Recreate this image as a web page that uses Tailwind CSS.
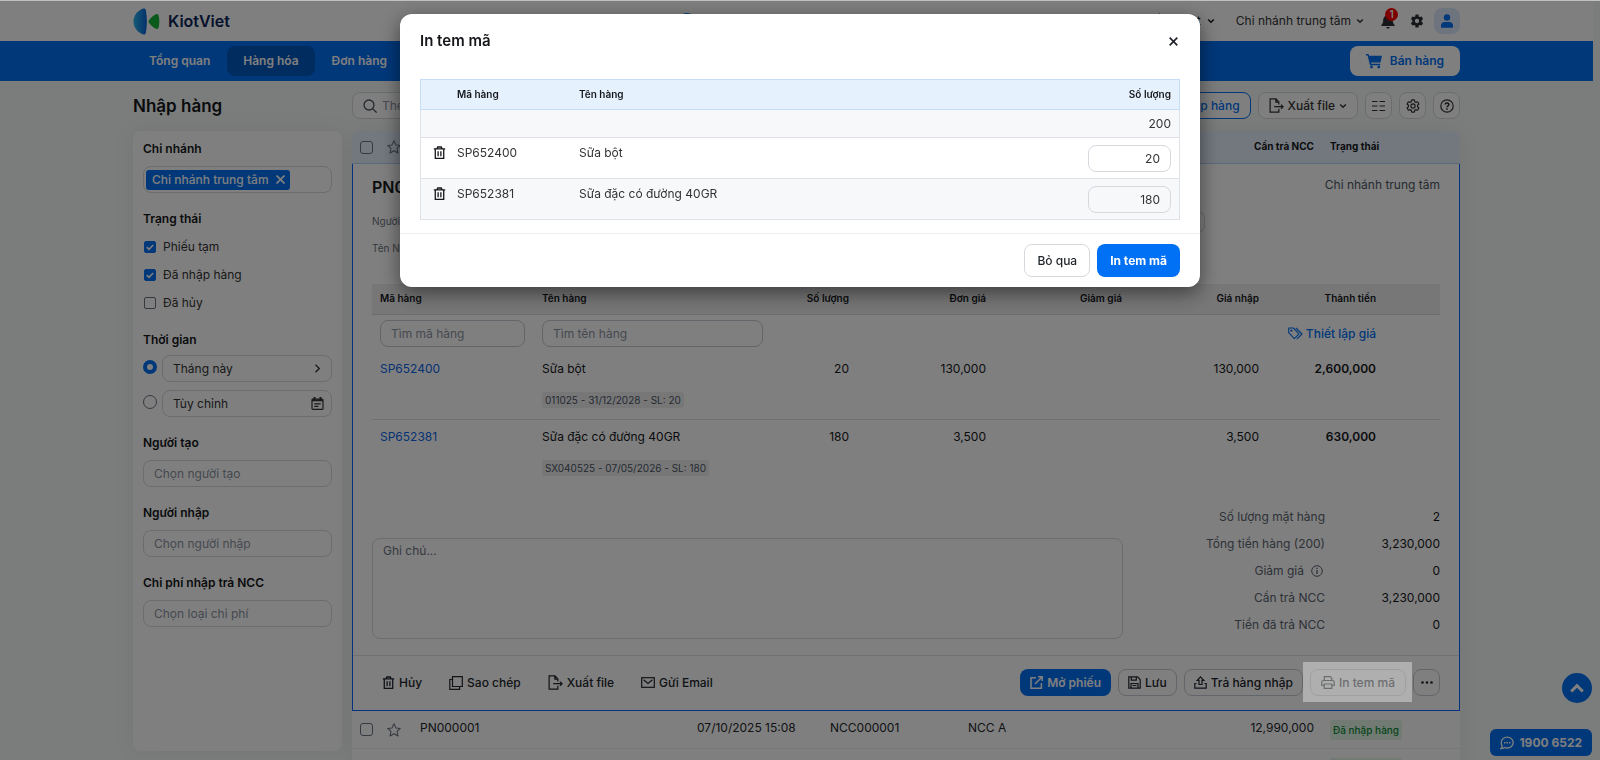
<!DOCTYPE html>
<html lang="vi">

<head>
  <meta charset="UTF-8" />
  <title>KiotViet - Nhập hàng</title>
  <meta name="viewport" content="width=device-width, initial-scale=1.0" />
  <script src="https://cdn.jsdelivr.net/npm/@tailwindcss/browser@4"></script>
</head>

<body class="h-screen overflow-hidden bg-[#f6f9f8] font-['Inter','Open_Sans',sans-serif] text-xs text-[#15171a] border-t border-[#c0c2c0]">

  <!-- icons -->
  <svg class="hidden">
    <symbol id="i-trash" viewBox="0 0 16 16" fill="none" stroke="currentColor" stroke-width="1.600">
      <path d="M1 3.500h14M5 3.200l.8-2h4.400l.8 2M2.800 3.500v11.700h10.400V3.500M6.300 6.500v6M9.700 6.500v6" />
    </symbol>
    <symbol id="i-star" viewBox="0 0 16 16" fill="none" stroke="currentColor" stroke-width="1.200" stroke-linejoin="round">
      <path d="M8 .9l2.200 4.700 5 .6-3.700 3.500 1 5.100L8 12.300l-4.500 2.500 1-5.100L.8 6.200l5-.6z" />
    </symbol>
    <symbol id="i-export" viewBox="0 0 16 16" fill="none" stroke="currentColor" stroke-width="1.300">
      <path d="M10.500 7V4.200L7.500 1H1.200v14h9.300v-3.500M7.300 1v3.500h3.200M5.500 9.300H15M12.800 7.100L15 9.300l-2.200 2.200" />
    </symbol>
    <symbol id="i-chevron" viewBox="0 0 10 10" fill="none" stroke="currentColor" stroke-width="1.800">
      <path d="M1.500 3L5 6.500 8.500 3" />
    </symbol>
    <symbol id="i-gear" viewBox="0 0 24 24" fill="currentColor">
      <path fill-rule="evenodd" d="M9.500 1h5l.6 3.200 1.800 1 3.100-1.100 2.500 4.300-2.500 2.100v3l2.500 2.100-2.500 4.300-3.100-1.100-1.800 1-.6 3.200h-5l-.6-3.200-1.800-1L4 19.900l-2.500-4.300L4 13.500v-3L1.500 8.400 4 4.100l3.100 1.100 1.800-1zM12 8.300a3.700 3.700 0 100 7.400 3.700 3.700 0 000-7.400z" />
    </symbol>
  </svg>

  <header class="mr-[7px] bg-white">
    <div class="max-w-[1327px] h-10 mx-auto flex items-center">
      <a href="#" class="flex items-center gap-2">
        <svg class="w-[27px] h-[27px]" viewBox="0 0 27 27">
          <defs>
            <linearGradient id="logo" x1="0" x2="1"><stop offset="0" stop-color="#2bb6ea" /><stop offset="1" stop-color="#0a63d8" /></linearGradient>
          </defs>
          <path d="M9.500.8C4 3 .5 8 .5 13.500S4 24 9.500 26.200c2 .7 3 .2 3.400-1.700 1.300-7 1.300-15 0-22C12.500.6 11.500.1 9.500.8z" fill="url(#logo)" />
          <path d="M16 12.200c2-2.700 4.300-4.800 7-6 1.300-.6 2.200-.1 2.600 1.300 1 4 1 8 0 12-.4 1.400-1.300 1.900-2.600 1.300-2.700-1.200-5-3.300-7-6-.8-1-.8-1.600 0-2.600z" fill="#16b437" />
        </svg>
        <span class="text-base font-semibold text-[#0a2458]">KiotViet</span>
      </a>
      <button class="mx-auto w-[30px] h-4 flex justify-center text-[#0070f4]" title="Giao hàng">
        <svg class="w-4 h-4" viewBox="0 0 16 16" fill="currentColor"><circle cx="8" cy="8" r="8" /></svg>
      </button>
      <div class="flex items-center">
        <button class="flex items-center gap-[6px] mr-[21px]">Tiếng Việt <svg class="w-2 h-2"><use href="#i-chevron" /></svg></button>
        <button class="flex items-center gap-[5px] text-[#333]">Chi nhánh trung tâm <svg class="w-2 h-2"><use href="#i-chevron" /></svg></button>
        <button class="relative ml-4 text-[#2b2f36]" title="Thông báo">
          <svg class="w-4 h-4" viewBox="0 0 16 16" fill="currentColor"><path d="M8 .8a1 1 0 011 1v.5c2.300.5 3.800 2.400 3.800 4.700 0 3 1 4 1.800 4.800v1.300H1.400v-1.300C2.200 11 3.200 10 3.200 7c0-2.300 1.500-4.200 3.800-4.700v-.5a1 1 0 011-1zM6.300 14h3.400a1.700 1.700 0 01-3.400 0z" /></svg>
          <span class="absolute -top-[5px] left-[5px] w-[13px] h-[13px] rounded-full bg-[#f00] text-white text-[10px] leading-[13px] font-semibold text-center">1</span>
        </button>
        <button class="ml-[14px] text-[#2b2f36]" title="Thiết lập"><svg class="w-[14px] h-[14px]"><use href="#i-gear" /></svg></button>
        <button class="ml-2.5 w-[26px] h-[26px] rounded-lg bg-[#dde9fb] flex items-center justify-center text-[#0070f4]" title="Tài khoản">
          <svg class="w-3 h-[14px]" viewBox="0 0 12 14" fill="currentColor"><circle cx="6" cy="3.500" r="3.200" /><path d="M0 13v-1.500C0 9.500 1.500 8 3.500 8h5c2 0 3.500 1.500 3.500 3.500V13q0 .7-.7.7H.7Q0 13.700 0 13z" /></svg>
        </button>
      </div>
    </div>
  </header>

  <nav class="mr-[7px] bg-[#0070f4]">
    <div class="max-w-[1327px] h-10 mx-auto flex items-center gap-px font-semibold text-white">
      <a href="#" class="h-[30px] px-4 flex items-center">Tổng quan</a>
      <a href="#" class="h-[30px] px-4 flex items-center rounded-lg bg-[#0058bf]">Hàng hóa</a>
      <a href="#" class="h-[30px] px-4 flex items-center">Đơn hàng</a>
      <button class="ml-auto h-[30px] px-4 flex items-center gap-2 rounded-lg bg-white text-[#0070f4] font-semibold">
        <svg class="w-4 h-4" viewBox="0 0 16 16" fill="currentColor"><path d="M0 1h2.600l.5 1.800H16l-1.500 6.600H5l.3 1.400h8.900v1.400H4L1.600 2.400H0z" /><circle cx="5.500" cy="14" r="1.400" /><circle cx="12.800" cy="14" r="1.400" /></svg>
        Bán hàng
      </button>
    </div>
  </nav>

  <main class="mr-[7px]">
    <div class="max-w-[1327px] mx-auto pt-[11px]">

      <!-- title and toolbar -->
      <div class="flex items-center gap-2.5 mb-3">
        <h1 class="w-[209px] text-[17px] leading-6 font-semibold">Nhập hàng</h1>
        <div class="flex-1 flex items-center gap-[7px]">
          <label class="w-[340px] h-[27px] px-2.5 flex items-center gap-[5px] rounded-lg border border-[#d5d9de] bg-white mr-auto">
            <svg class="w-[14px] h-[14px] text-[#4b5563]" viewBox="0 0 14 14" fill="none" stroke="currentColor" stroke-width="1.300"><circle cx="6" cy="6" r="5" /><path d="M9.600 9.600l4 4" /></svg>
            <input type="text" placeholder="Theo mã phiếu nhập" class="flex-1 outline-none placeholder:text-[#8b93a0]" />
          </label>
          <button class="h-[27px] px-2.5 rounded-lg border border-[#0070f4] bg-white text-[#0070f4] font-medium">+ Nhập hàng</button>
          <button class="h-[27px] px-2.5 flex items-center gap-1 rounded-lg border border-[#d5d9de] bg-white font-medium text-[#333]">
            <svg class="w-[15px] h-[15px]"><use href="#i-export" /></svg> Xuất file <svg class="w-2 h-2"><use href="#i-chevron" /></svg>
          </button>
          <button class="w-[27px] h-[27px] flex items-center justify-center rounded-lg border border-[#d5d9de] bg-white text-[#333]" title="Cột hiển thị">
            <svg class="w-[13px] h-3" viewBox="0 0 13 12" stroke="currentColor" stroke-width="1.200"><path d="M0 1.500h5.500M7.500 1.500H13M0 6h5.500M7.500 6H13M0 10.500h5.500M7.500 10.500H13" /></svg>
          </button>
          <button class="w-[27px] h-[27px] flex items-center justify-center rounded-lg border border-[#d5d9de] bg-white text-[#333]" title="Thiết lập">
            <svg class="w-[14px] h-[14px]" viewBox="0 0 24 24" fill="none" stroke="currentColor" stroke-width="2" stroke-linejoin="round"><path d="M9.800 1.500h4.400l.7 3 2 1.200 3-.9 2.200 3.800-2.300 2.100v2.600l2.300 2.100-2.200 3.800-3-.9-2 1.200-.7 3H9.800l-.7-3-2-1.200-3 .9-2.200-3.800 2.300-2.100v-2.600L1.900 8.600l2.200-3.800 3 .9 2-1.200z" /><circle cx="12" cy="12" r="3.600" /></svg>
          </button>
          <button class="w-[27px] h-[27px] flex items-center justify-center rounded-lg border border-[#d5d9de] bg-white text-[#333]" title="Trợ giúp">
            <svg class="w-[14px] h-[14px]" viewBox="0 0 14 14" fill="none" stroke="currentColor" stroke-width="1.200"><circle cx="7" cy="7" r="6.200" /><path d="M5.200 5.600c0-2.300 3.700-2.300 3.700 0 0 1.300-1.900 1.300-1.900 2.700" stroke-width="1.500" /><path d="M7 9.200v1.500" stroke-width="1.500" /></svg>
          </button>
        </div>
      </div>

      <div class="flex items-start gap-2.5">

        <!-- filters -->
        <aside class="w-[209px] h-[620px] shrink-0 px-2.5 pt-[9px] rounded-lg bg-white shadow-[0_0_24px_rgba(0,0,0,0.06)] flex flex-col gap-[17px]">
          <section>
            <h2 class="mb-2 leading-[18px] font-semibold">Chi nhánh</h2>
            <div class="h-[27px] px-[2px] flex items-center rounded-lg border border-[#d5d9de]">
              <span class="h-5 pl-1.5 pr-[5px] flex items-center gap-[7px] rounded-[3px] bg-[#0070f4] text-white font-medium">Chi nhánh trung tâm
                <button title="Xóa"><svg class="w-[9px] h-[9px]" viewBox="0 0 9 9" stroke="currentColor" stroke-width="1.700"><path d="M.5.5l8 8M8.500.5l-8 8" /></svg></button>
              </span>
            </div>
          </section>

          <section>
            <h2 class="mb-2 leading-[18px] font-semibold">Trạng thái</h2>
            <div class="flex flex-col gap-[6px] text-[#333]">
              <label class="relative h-[22px] pl-px flex items-center gap-[7px]">
                <input type="checkbox" checked class="peer appearance-none w-3 h-3 rounded-[2px] border border-[#6b7280] checked:bg-[#0070f4] checked:border-[#0070f4]" />
                <svg class="absolute left-[3px] w-2 h-2 text-white hidden peer-checked:block" viewBox="0 0 8 8" fill="none" stroke="currentColor" stroke-width="1.600"><path d="M.8 4.200L3 6.300 7.200 2" /></svg>
                Phiếu tạm
              </label>
              <label class="relative h-[22px] pl-px flex items-center gap-[7px]">
                <input type="checkbox" checked class="peer appearance-none w-3 h-3 rounded-[2px] border border-[#6b7280] checked:bg-[#0070f4] checked:border-[#0070f4]" />
                <svg class="absolute left-[3px] w-2 h-2 text-white hidden peer-checked:block" viewBox="0 0 8 8" fill="none" stroke="currentColor" stroke-width="1.600"><path d="M.8 4.200L3 6.300 7.200 2" /></svg>
                Đã nhập hàng
              </label>
              <label class="relative h-[22px] pl-px flex items-center gap-[7px]">
                <input type="checkbox" class="peer appearance-none w-3 h-3 rounded-[2px] border border-[#6b7280] checked:bg-[#0070f4] checked:border-[#0070f4]" />
                Đã hủy
              </label>
            </div>
          </section>

          <section>
            <h2 class="mb-[6px] leading-[18px] font-semibold">Thời gian</h2>
            <div class="flex flex-col gap-2 text-[#333]">
              <div class="flex items-start gap-[5px]">
                <input type="radio" name="time" id="time-month" aria-label="Tháng này" checked class="mt-[5px] appearance-none w-[14px] h-[14px] rounded-full border border-[#6b7280] checked:border-4 checked:border-[#0070f4]" />
                <button class="flex-1 h-[27px] px-2.5 flex items-center justify-between rounded-lg border border-[#d5d9de]">Tháng này
                  <svg class="w-[7px] h-[9px]" viewBox="0 0 7 9" fill="none" stroke="currentColor" stroke-width="1.300"><path d="M1.500.8l3.800 3.700-3.800 3.700" /></svg>
                </button>
              </div>
              <div class="flex items-start gap-[5px]">
                <input type="radio" name="time" id="time-custom" aria-label="Tùy chỉnh" class="mt-[5px] appearance-none w-[14px] h-[14px] rounded-full border border-[#6b7280] checked:border-4 checked:border-[#0070f4]" />
                <button class="flex-1 h-[27px] pl-2.5 pr-[7px] flex items-center justify-between rounded-lg border border-[#d5d9de]">Tùy chỉnh
                  <svg class="w-[13px] h-[13px]" viewBox="0 0 13 13" fill="none" stroke="currentColor" stroke-width="1.200"><rect x="1" y="2" width="11" height="10.400" rx="1" /><path d="M1 3.300h11M3.500 0v3M9.500 0v3" stroke-width="2" /><path d="M3.300 6.800h6.400M3.300 9.300h4" /></svg>
                </button>
              </div>
            </div>
          </section>

          <section>
            <label for="creator" class="block mb-2 leading-[18px] font-semibold">Người tạo</label>
            <input id="creator" type="text" placeholder="Chọn người tạo" class="block w-full h-[27px] px-2.5 rounded-lg border border-[#d5d9de] placeholder:text-[#8b93a0]" />
          </section>
          <section>
            <label for="importer" class="block mb-2 leading-[18px] font-semibold">Người nhập</label>
            <input id="importer" type="text" placeholder="Chọn người nhập" class="block w-full h-[27px] px-2.5 rounded-lg border border-[#d5d9de] placeholder:text-[#8b93a0]" />
          </section>
          <section>
            <label for="cost" class="block mb-2 leading-[18px] font-semibold">Chi phí nhập trả NCC</label>
            <input id="cost" type="text" placeholder="Chọn loại chi phí" class="block w-full h-[27px] px-2.5 rounded-lg border border-[#d5d9de] placeholder:text-[#8b93a0]" />
          </section>
        </aside>

        <!-- receipts -->
        <table class="flex-1 w-full table-fixed border-separate border-spacing-0 bg-white rounded-t-lg shadow-[0_0_24px_rgba(0,0,0,0.06)]">
          <colgroup>
            <col class="w-7" /><col class="w-8" /><col class="w-[277px]" /><col class="w-[133px]" /><col class="w-[138px]" /><col /><col class="w-[138px]" />
          </colgroup>
          <thead class="text-[10px] font-semibold">
            <tr class="h-[33px]">
              <th class="pl-2 rounded-tl-lg bg-[#e6f1fe] border-b border-[#b5d3f8]"><input type="checkbox" aria-label="Chọn tất cả" class="block appearance-none w-[13px] h-[13px] rounded-[3px] border border-[#6b7280]" /></th>
              <th class="pl-[7px] bg-[#e6f1fe] border-b border-[#b5d3f8] text-[#6b7280]"><svg class="w-[14px] h-[14px]"><use href="#i-star" /></svg></th>
              <th class="px-2 text-left bg-[#e6f1fe] border-b border-[#b5d3f8]">Mã nhập hàng</th>
              <th class="px-2 text-left bg-[#e6f1fe] border-b border-[#b5d3f8]">Thời gian</th>
              <th class="px-2 text-left bg-[#e6f1fe] border-b border-[#b5d3f8]">Mã NCC</th>
              <th class="px-2 text-right bg-[#e6f1fe] border-b border-[#b5d3f8]">Cần trả NCC</th>
              <th class="px-2 text-left rounded-tr-lg bg-[#e6f1fe] border-b border-[#b5d3f8]">Trạng thái</th>
            </tr>
          </thead>
          <tbody>
            <tr>
              <td colspan="7" class="border-x border-b border-[#0a62ff] p-0 align-top">
                <div class="px-[19px] pt-[11px]">
                  <div class="h-6 flex items-start justify-between">
                    <h3 class="text-base font-semibold">PN000002</h3>
                    <span class="leading-5 text-[#4b5563]">Chi nhánh trung tâm</span>
                  </div>
                  <div class="w-[78%] h-5 mt-[13px] flex items-center justify-between text-[10px] text-[#6b7280]">
                    <span>Người tạo:</span>
                    <button class="w-40 h-5 rounded-md border border-[#d5d9de]" title="Người nhập"></button>
                  </div>
                  <div class="h-5 mt-[7px] flex items-center text-[10px] text-[#6b7280]">Tên NCC:</div>

                  <table class="w-full mt-[25px] table-fixed border-separate border-spacing-0">
                    <colgroup>
                      <col class="w-[162px]" /><col /><col class="w-[86px]" /><col class="w-[137px]" /><col class="w-[136px]" /><col class="w-[137px]" /><col class="w-[117px]" /><col class="w-14" />
                    </colgroup>
                    <thead class="text-[10px]">
                      <tr class="h-[31px] bg-[#efeff1]">
                        <th class="px-2 text-left font-semibold border-b border-[#d5d9de]">Mã hàng</th>
                        <th class="px-2 text-left font-semibold border-b border-[#d5d9de]">Tên hàng</th>
                        <th class="px-2 text-right font-semibold border-b border-[#d5d9de]">Số lượng</th>
                        <th class="px-2 text-right font-semibold border-b border-[#d5d9de]">Đơn giá</th>
                        <th class="px-2 text-right font-semibold border-b border-[#d5d9de]">Giảm giá</th>
                        <th class="px-2 text-right font-semibold border-b border-[#d5d9de]">Giá nhập</th>
                        <th class="px-2 text-right font-semibold border-b border-[#d5d9de]">Thành tiền</th>
                        <th class="border-b border-[#d5d9de]"></th>
                      </tr>
                    </thead>
                    <tbody>
                      <tr class="h-[37px]">
                        <td class="pl-2 pr-[9px]"><input type="text" aria-label="Tìm mã hàng" placeholder="Tìm mã hàng" class="block w-full h-[27px] px-2.5 rounded-lg border border-[#c5cad2] placeholder:text-[#8b93a0]" /></td>
                        <td class="px-2"><input type="text" aria-label="Tìm tên hàng" placeholder="Tìm tên hàng" class="block w-full h-[27px] px-2.5 rounded-lg border border-[#c5cad2] placeholder:text-[#8b93a0]" /></td>
                        <td colspan="5" class="px-2">
                          <a href="#" class="flex items-center justify-end gap-[3px] text-[#0070f4] font-medium">
                            <svg class="w-[15px] h-[13px]" viewBox="0 0 15 13" fill="none" stroke="currentColor" stroke-width="1.100" stroke-linejoin="round"><path d="M.7 1v4.700l5.600 5.900 4.700-4.700L5.400 1z" /><path d="M8 1l6 6-5.200 5.200" /><circle cx="3.400" cy="3.700" r=".6" /></svg>
                            Thiết lập giá
                          </a>
                        </td>
                        <td></td>
                      </tr>
                      <tr class="h-[68px] align-top leading-[18px]">
                        <td class="px-2 pt-2 border-b border-[#dfe2e6]"><a href="#" class="text-[#0a66e8]">SP652400</a></td>
                        <td class="px-2 pt-2 border-b border-[#dfe2e6]">Sữa bột
                          <div class="mt-[14px] flex"><span class="h-4 px-[3px] rounded-[3px] bg-[#eeeff1] text-[10px] leading-4 text-[#4b5563]">011025 - 31/12/2028 - SL: 20</span></div>
                        </td>
                        <td class="px-2 pt-2 text-right border-b border-[#dfe2e6]">20</td>
                        <td class="px-2 pt-2 text-right border-b border-[#dfe2e6]">130,000</td>
                        <td class="border-b border-[#dfe2e6]"></td>
                        <td class="px-2 pt-2 text-right border-b border-[#dfe2e6]">130,000</td>
                        <td class="px-2 pt-2 text-right font-semibold border-b border-[#dfe2e6]">2,600,000</td>
                        <td class="border-b border-[#dfe2e6]"></td>
                      </tr>
                      <tr class="h-[68px] align-top leading-[18px]">
                        <td class="px-2 pt-2"><a href="#" class="text-[#0a66e8]">SP652381</a></td>
                        <td class="px-2 pt-2">Sữa đặc có đường 40GR
                          <div class="mt-[14px] flex"><span class="h-4 px-[3px] rounded-[3px] bg-[#eeeff1] text-[10px] leading-4 text-[#4b5563]">SX040525 - 07/05/2026 - SL: 180</span></div>
                        </td>
                        <td class="px-2 pt-2 text-right">180</td>
                        <td class="px-2 pt-2 text-right">3,500</td>
                        <td></td>
                        <td class="px-2 pt-2 text-right">3,500</td>
                        <td class="px-2 pt-2 text-right font-semibold">630,000</td>
                        <td></td>
                      </tr>
                    </tbody>
                  </table>

                  <div class="mt-[15px] mb-4 flex items-end justify-between">
                    <textarea aria-label="Ghi chú" placeholder="Ghi chú..." class="block w-[751px] h-[101px] px-2.5 py-1 resize-none rounded-lg border border-[#d5d9de] placeholder:text-[#6b7280]"></textarea>
                    <dl class="w-[260px] pb-px grid grid-cols-[1fr_115px] leading-[27px] text-right">
                      <dt class="text-[#5b6470]">Số lượng mặt hàng</dt><dd>2</dd>
                      <dt class="text-[#5b6470]">Tổng tiền hàng (200)</dt><dd>3,230,000</dd>
                      <dt class="flex items-center justify-end gap-[7px] pr-0.5 text-[#5b6470]">Giảm giá
                        <svg class="w-3 h-3" viewBox="0 0 12 12" fill="none" stroke="currentColor"><circle cx="6" cy="6" r="5.300" /><path d="M6 2.800v1.200M6 5v4" stroke-width="1.300" /></svg>
                      </dt><dd>0</dd>
                      <dt class="text-[#5b6470]">Cần trả NCC</dt><dd>3,230,000</dd>
                      <dt class="text-[#5b6470]">Tiền đã trả NCC</dt><dd>0</dd>
                    </dl>
                  </div>
                </div>

                <div class="px-[19px] pt-[13px] pb-[14px] flex items-center border-t border-[#dfe2e6] font-medium text-[#22262c]">
                  <div class="flex items-center gap-[27px] pl-2.5">
                    <button class="flex items-center gap-1"><svg class="w-[13px] h-[13px]"><use href="#i-trash" /></svg> Hủy</button>
                    <button class="flex items-center gap-1">
                      <svg class="w-[14px] h-[14px]" viewBox="0 0 14 14" fill="none" stroke="currentColor" stroke-width="1.200"><path d="M3.500.7h9.800v9.800H3.500z" /><path d="M3.500 3.500H.8v9.800h9.800v-2.800" /></svg> Sao chép
                    </button>
                    <button class="flex items-center gap-1"><svg class="w-[15px] h-[15px]"><use href="#i-export" /></svg> Xuất file</button>
                    <button class="flex items-center gap-1">
                      <svg class="w-[14px] h-[11px]" viewBox="0 0 14 11" fill="none" stroke="currentColor" stroke-width="1.200"><rect x=".7" y=".7" width="12.600" height="9.600" /><path d="M2.500 2.800L7 6.500l4.500-3.700" /></svg> Gửi Email
                    </button>
                  </div>
                  <div class="ml-auto flex items-center gap-[7px]">
                    <button class="h-[27px] px-2.5 flex items-center gap-1 rounded-lg bg-[#0070f4] text-white font-semibold">
                      <svg class="w-[13px] h-[13px]" viewBox="0 0 13 13" fill="none" stroke="currentColor" stroke-width="1.500"><path d="M6 1.800H1v10.400h10.400V7M8 .8h4.200V5M12 1L5 8" /></svg> Mở phiếu
                    </button>
                    <button class="h-[27px] px-[9px] flex items-center gap-1 rounded-lg border border-[#c5cad2]">
                      <svg class="w-[13px] h-[13px]" viewBox="0 0 13 13" fill="none" stroke="currentColor" stroke-width="1.200"><path d="M.8.8h8.700l2.700 2.700v8.700H.8zM3.300.8v3.400h5V.8M3 12V7.500h7V12M4.500 9.500h4" /></svg> Lưu
                    </button>
                    <button class="h-[27px] px-[9px] flex items-center gap-1 rounded-lg border border-[#c5cad2]">
                      <svg class="w-[13px] h-[13px]" viewBox="0 0 13 13" fill="none" stroke="currentColor" stroke-width="1.200"><path d="M6.500.9l3.300 3.400H8v4.200H5V4.300H3.200zM2.500 7.500H.8v4.700h11.400V7.500h-1.700" /></svg> Trả hàng nhập
                    </button>
                    <div class="relative">
                      <button class="h-[27px] px-2.5 flex items-center gap-1 rounded-lg border border-[#c5cad2]">
                        <svg class="w-[14px] h-[13px]" viewBox="0 0 14 13" fill="none" stroke="currentColor" stroke-width="1.200"><path d="M3.200 4.500V.7h6l1.600 1.600v2.200M3.200 9.500H.8v-3.500q0-1.500 1.500-1.500h9.400q1.500 0 1.500 1.500v3.500h-2.400M3.200 8h7.600v4.300H3.200z" /></svg> In tem mã
                      </button>
                      <span class="absolute -left-[7px] -right-[6px] -top-[7px] -bottom-[6px] z-50 bg-white/38"></span>
                    </div>
                    <button class="w-[27px] h-[27px] flex items-center justify-center rounded-lg border border-[#c5cad2]" title="Thêm">
                      <svg class="w-3 h-[3px]" viewBox="0 0 12 3" fill="currentColor"><circle cx="1.500" cy="1.500" r="1.300" /><circle cx="6" cy="1.500" r="1.300" /><circle cx="10.500" cy="1.500" r="1.300" /></svg>
                    </button>
                  </div>
                </div>
              </td>
            </tr>
            <tr class="h-[38px] text-[#22262c]">
              <td class="pl-2 border-b border-[#eceef0]"><input type="checkbox" aria-label="Chọn PN000001" class="block appearance-none w-[13px] h-[13px] rounded-[3px] border border-[#6b7280]" /></td>
              <td class="pl-[7px] border-b border-[#eceef0] text-[#6b7280]"><svg class="w-[14px] h-[14px]"><use href="#i-star" /></svg></td>
              <td class="px-2 pb-1 border-b border-[#eceef0]">PN000001</td>
              <td class="px-2 pb-1 border-b border-[#eceef0]">07/10/2025 15:08</td>
              <td class="px-2 pb-1 border-b border-[#eceef0]">NCC000001</td>
              <td class="px-2 pb-1 border-b border-[#eceef0]"><span class="flex justify-between"><span>NCC A</span><span>12,990,000</span></span></td>
              <td class="pl-2 border-b border-[#eceef0]"><span class="block w-fit h-5 px-[3px] rounded-[3px] bg-[#e2f6e8] text-[10px] leading-5 font-medium text-[#0d8a35]">Đã nhập hàng</span></td>
            </tr>
            <tr class="h-[38px] text-[#22262c]">
              <td class="pl-2"><input type="checkbox" aria-label="Chọn PN000000" class="block appearance-none w-[13px] h-[13px] rounded-[3px] border border-[#6b7280]" /></td>
              <td class="pl-[7px] text-[#6b7280]"><svg class="w-[14px] h-[14px]"><use href="#i-star" /></svg></td>
              <td class="px-2 pb-1">PN000000</td>
              <td class="px-2 pb-1">07/10/2025 15:01</td>
              <td class="px-2 pb-1"></td>
              <td class="px-2 pb-1 text-right">3,000,000</td>
              <td class="pl-2"><span class="block w-fit h-5 px-[3px] rounded-[3px] bg-[#e2f6e8] text-[10px] leading-5 font-medium text-[#0d8a35]">Đã nhập hàng</span></td>
            </tr>
          </tbody>
        </table>
      </div>
    </div>
  </main>

  <!-- floating support buttons -->
  <div class="fixed right-2 bottom-1 flex flex-col items-end gap-[26px]">
    <button class="w-[30px] h-[30px] flex items-center justify-center rounded-full bg-[#0070f4] text-white" title="Lên đầu trang">
      <svg class="w-[14px] h-[10px]" viewBox="0 0 14 10" fill="none" stroke="currentColor" stroke-width="3"><path d="M1.200 8.500L7 2.700l5.800 5.800" /></svg>
    </button>
    <a href="#" class="h-[27px] px-2.5 flex items-center gap-[5px] rounded-md bg-[#0070f4] text-white font-bold">
      <svg class="w-[14px] h-[14px]" viewBox="0 0 14 14" fill="none" stroke="currentColor" stroke-width="1.300"><path d="M7.200 1.200c3.300 0 6 2.400 6 5.400s-2.700 5.400-6 5.400c-1 0-1.900-.2-2.700-.6-1 .8-2.300 1.200-3.600 1.200.8-.7 1.300-1.500 1.300-2.500-.6-1-1-2.200-1-3.500 0-3 2.700-5.400 6-5.400z" /><path d="M4 6.700h1.500M6.500 6.700H8M9 6.700h1.500" stroke-width="1.600" /></svg>
      1900 6522
    </a>
  </div>

  <!-- print labels dialog -->
  <div class="fixed inset-x-0 top-px bottom-0 z-40 bg-black/50 pt-[13px]">
    <div role="dialog" aria-labelledby="dialog-title" class="max-w-[800px] mx-auto rounded-xl bg-white shadow-[0_6px_20px_rgba(0,0,0,0.5)]">
      <div class="px-5 pt-[15px] flex items-center justify-between">
        <h2 id="dialog-title" class="text-[15px] leading-6 font-semibold">In tem mã</h2>
        <button class="mr-0.5 text-[#22262c]" title="Đóng"><svg class="w-[9px] h-[9px]" viewBox="0 0 9 9" stroke="currentColor" stroke-width="1.700"><path d="M.7.7l7.600 7.600M8.300.7L.7 8.300" /></svg></button>
      </div>

      <div class="px-5 pt-[26px] pb-[13px]">
        <table class="w-full table-fixed border-separate border-spacing-0">
          <colgroup><col class="w-[29px]" /><col class="w-[122px]" /><col /><col class="w-[120px]" /></colgroup>
          <thead class="text-[10px]">
            <tr class="h-[31px] bg-[#e6f1fe]">
              <th class="border-y border-l border-[#c5dcfa]"></th>
              <th class="px-2 text-left font-semibold border-y border-[#c5dcfa]">Mã hàng</th>
              <th class="px-2 text-left font-semibold border-y border-[#c5dcfa]">Tên hàng</th>
              <th class="px-2 text-right font-semibold border-y border-r border-[#c5dcfa]">Số lượng</th>
            </tr>
          </thead>
          <tbody class="text-[#333]">
            <tr class="h-7 bg-[#f7f8fa]">
              <td class="border-b border-l border-[#dfe2e6]"></td>
              <td class="border-b border-[#dfe2e6]"></td>
              <td class="border-b border-[#dfe2e6]"></td>
              <td class="px-2 text-right border-b border-r border-[#dfe2e6]">200</td>
            </tr>
            <tr class="h-[41px] align-top leading-[18px]">
              <td class="pt-2 pl-3 border-b border-l border-[#dfe2e6]"><button class="block text-[#15171a]" title="Xóa"><svg class="w-[13px] h-[13px]"><use href="#i-trash" /></svg></button></td>
              <td class="pt-1.5 px-2 border-b border-[#dfe2e6]">SP652400</td>
              <td class="pt-1.5 px-2 border-b border-[#dfe2e6]">Sữa bột</td>
              <td class="pt-[7px] px-2 border-b border-r border-[#dfe2e6]"><input type="text" aria-label="Số lượng SP652400" value="20" class="block ml-auto w-[83px] h-[27px] px-2.5 text-right rounded-lg border border-[#d5d9de] bg-white" /></td>
            </tr>
            <tr class="h-[41px] align-top leading-[18px] bg-[#f7f8fa]">
              <td class="pt-2 pl-3 border-b border-l border-[#dfe2e6]"><button class="block text-[#15171a]" title="Xóa"><svg class="w-[13px] h-[13px]"><use href="#i-trash" /></svg></button></td>
              <td class="pt-1.5 px-2 border-b border-[#dfe2e6]">SP652381</td>
              <td class="pt-1.5 px-2 border-b border-[#dfe2e6]">Sữa đặc có đường 40GR</td>
              <td class="pt-[7px] px-2 border-b border-r border-[#dfe2e6]"><input type="text" aria-label="Số lượng SP652381" value="180" class="block ml-auto w-[83px] h-[27px] px-2.5 text-right rounded-lg border border-[#d5d9de]" /></td>
            </tr>
          </tbody>
        </table>
      </div>

      <div class="px-5 py-2.5 flex justify-end gap-[7px] border-t border-[#eceef0]">
        <button class="h-[33px] px-3 rounded-lg border border-[#d5d9de] font-medium text-[#22262c]">Bỏ qua</button>
        <button class="h-[33px] px-[13px] rounded-lg bg-[#0070f4] font-bold text-white">In tem mã</button>
      </div>
    </div>
  </div>

</body>
</html>
